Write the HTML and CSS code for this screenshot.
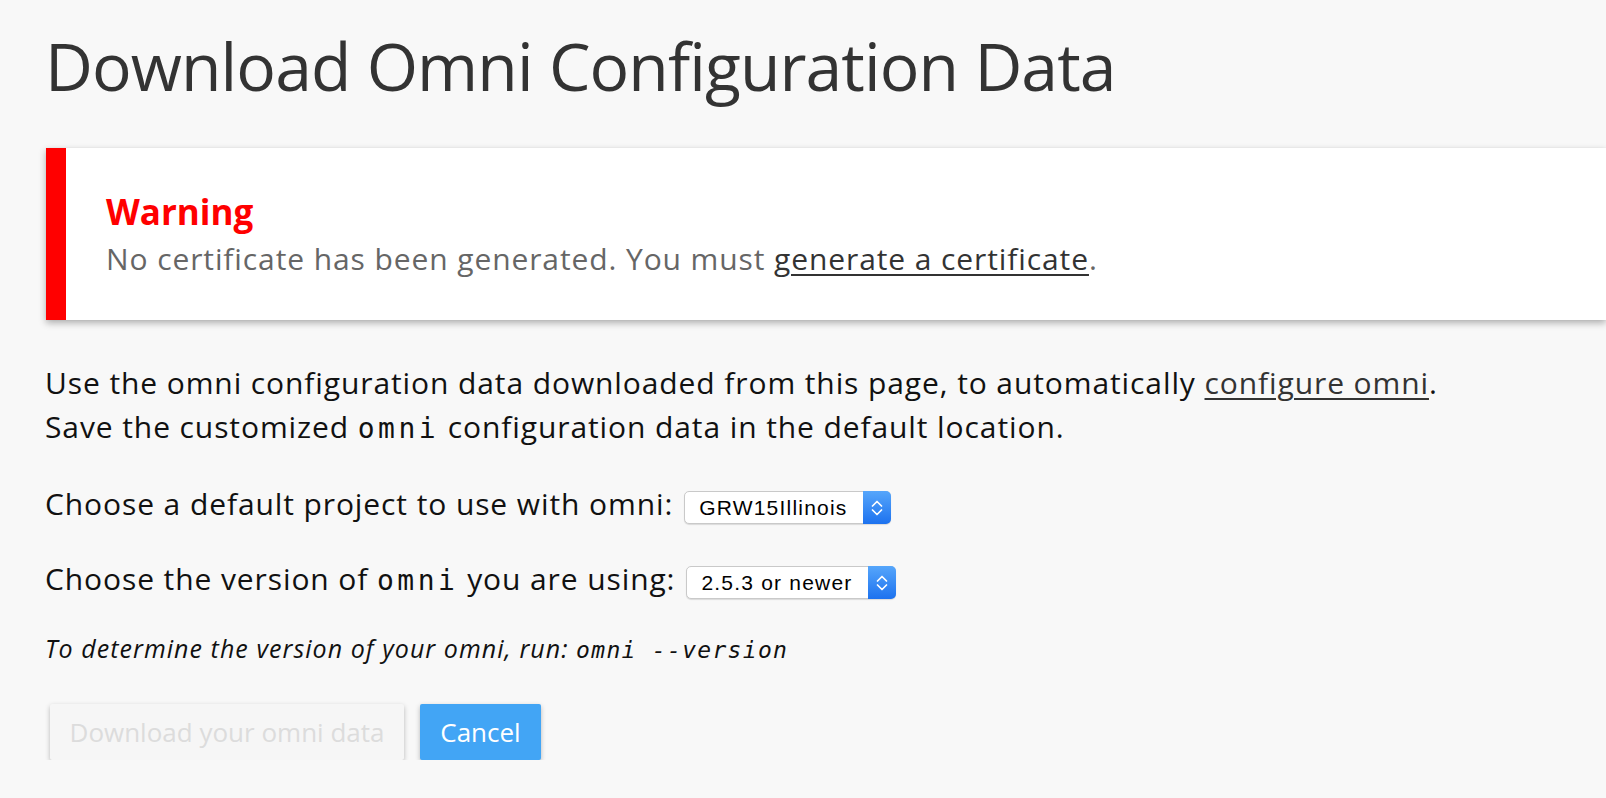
FILE: index.html
```html
<!DOCTYPE html>
<html lang="en">
<head>
<meta charset="utf-8">
<title>Download Omni Configuration Data</title>
<link rel="stylesheet" href="styles.css">
</head>
<body>
<main class="page">
  <h1 class="title">Download Omni Configuration Data</h1>

  <section class="alert">
    <h2 class="alert-title">Warning</h2>
    <p class="alert-text">No certificate has been generated. You must <a href="#" class="link">generate a certificate</a>.</p>
  </section>

  <p class="intro">Use the omni configuration data downloaded from this page, to automatically <a href="#" class="link">configure omni</a>.<br>Save the customized <code class="mono">omni</code> configuration data in the default location.</p>

  <div class="field">
    <span class="field-label">Choose a default project to use with omni:</span>
    <span class="select select-project">
      <span class="select-value">GRW15Illinois</span>
      <span class="select-arrows"><svg width="14" height="20" viewBox="0 0 14 20"><path d="M2.5 8 L7 3.5 L11.5 8 M2.5 12 L7 16.5 L11.5 12" fill="none" stroke="#fff" stroke-width="1.7" stroke-linecap="round" stroke-linejoin="round"/></svg></span>
    </span>
  </div>

  <div class="field">
    <span class="field-label">Choose the version of <code class="mono">omni</code> you are using:</span>
    <span class="select select-version">
      <span class="select-value">2.5.3 or newer</span>
      <span class="select-arrows"><svg width="14" height="20" viewBox="0 0 14 20"><path d="M2.5 8 L7 3.5 L11.5 8 M2.5 12 L7 16.5 L11.5 12" fill="none" stroke="#fff" stroke-width="1.7" stroke-linecap="round" stroke-linejoin="round"/></svg></span>
    </span>
  </div>

  <p class="hint">To determine the version of your omni, run: <code class="hint-code">omni --version</code></p>

  <div class="actions">
    <button class="btn btn-disabled" disabled>Download your omni data</button>
    <button class="btn btn-primary">Cancel</button>
  </div>
</main>
</body>
</html>
```

FILE: styles.css
```css
html, body {
  margin: 0;
  padding: 0;
  background: #f8f8f8;
  overflow: hidden;
}

body {
  font-family: "Open Sans", "Liberation Sans", sans-serif;
  color: #111;
}

.page {
  padding: 25px 0 0 45px;
}

.title {
  margin: 0;
  font-size: 66px;
  line-height: 80px;
  letter-spacing: -0.9px;
  font-weight: 400;
  color: #333;
}

.alert {
  margin-top: 43px;
  margin-left: 1px;
  height: 172px;
  box-sizing: border-box;
  background: #fff;
  border-left: 20px solid #ff0000;
  padding: 44px 0 0 40px;
  box-shadow: 0 3px 7px rgba(0, 0, 0, 0.3), 0 0 1px rgba(0, 0, 0, 0.08);
}

.alert-title {
  margin: 0;
  font-size: 35px;
  line-height: 40px;
  font-weight: 700;
  color: #ff0000;
}

.alert-text {
  margin: 5px 0 0;
  font-size: 30px;
  line-height: 44px;
  letter-spacing: 0.9px;
  color: #666;
}

.link {
  color: #333;
  text-decoration: underline;
  text-underline-offset: 4px;
  text-decoration-thickness: 2px;
}

.intro {
  margin: 41px 0 0;
  font-size: 30px;
  line-height: 44px;
  letter-spacing: 0.9px;
}

.mono {
  font-family: "DejaVu Sans Mono", "Liberation Mono", monospace;
  font-size: 28px;
  letter-spacing: 3.5px;
}

.field {
  display: flex;
  align-items: baseline;
  margin-top: 31px;
  font-size: 30px;
  line-height: 44px;
  letter-spacing: 0.9px;
}

.select {
  display: inline-flex;
  align-items: stretch;
  margin-left: 11px;
  height: 33px;
  box-sizing: border-box;
  background: #fff;
  border: 1px solid #c9c9c9;
  border-radius: 5px;
  box-shadow: 0 1px 1px rgba(0, 0, 0, 0.12);
  font-family: "Liberation Sans", Arial, sans-serif;
  font-size: 21px;
  letter-spacing: 1.2px;
  color: #000;
}

.select-project { width: 207px; }
.select-version { width: 210px; }

.select-value {
  flex: 1;
  padding: 1px 0 0 14px;
  line-height: 30px;
}

.select-arrows {
  display: flex;
  align-items: center;
  justify-content: center;
  width: 28px;
  margin: -1px -1px -1px 0;
  border-radius: 0 5px 5px 0;
  background: linear-gradient(#56a6fb, #1d72ef);
}

.hint {
  margin: 27px 0 0;
  font-size: 25px;
  line-height: 36px;
  letter-spacing: 1.05px;
  font-style: italic;
}

.hint-code {
  font-family: "DejaVu Sans Mono", "Liberation Mono", monospace;
  font-size: 23px;
  letter-spacing: 1.3px;
  font-style: oblique;
}

.actions {
  display: flex;
  gap: 16px;
  margin-top: 36px;
  margin-left: 5px;
}

.btn {
  height: 56px;
  border: 0;
  border-radius: 2px;
  font-family: "Open Sans", sans-serif;
  font-size: 26px;
  padding: 0;
  white-space: nowrap;
  box-shadow: 0 2px 5px rgba(0, 0, 0, 0.26);
}

.btn-disabled {
  width: 354px;
  background: #f6f6f6;
  color: #dcdcdc;
}

.btn-primary {
  width: 121px;
  background: #42a5f5;
  color: #fff;
}
```
